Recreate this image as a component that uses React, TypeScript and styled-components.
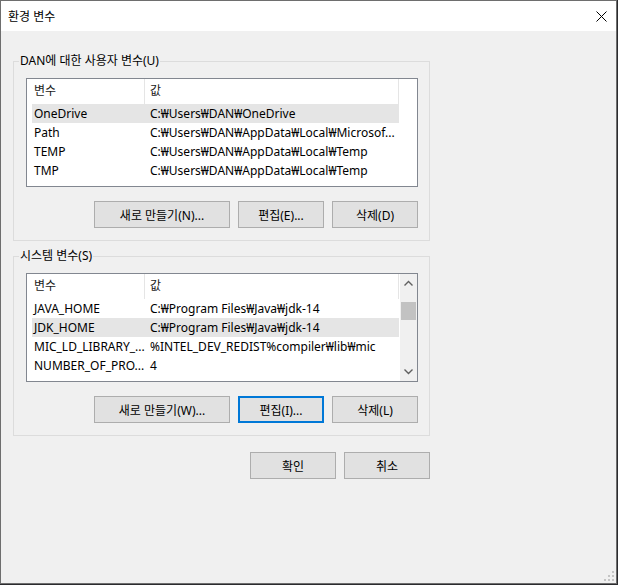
import * as React from "react";
import styled, { createGlobalStyle } from "styled-components";

interface TVar {
  name: string;
  value: string;
}

const userVars: TVar[] = [
  { name: "OneDrive", value: "C:₩Users₩DAN₩OneDrive" },
  { name: "Path", value: "C:₩Users₩DAN₩AppData₩Local₩Microsof..." },
  { name: "TEMP", value: "C:₩Users₩DAN₩AppData₩Local₩Temp" },
  { name: "TMP", value: "C:₩Users₩DAN₩AppData₩Local₩Temp" },
];

const systemVars: TVar[] = [
  { name: "JAVA_HOME", value: "C:₩Program Files₩Java₩jdk-14" },
  { name: "JDK_HOME", value: "C:₩Program Files₩Java₩jdk-14" },
  { name: "MIC_LD_LIBRARY_...", value: "%INTEL_DEV_REDIST%compiler₩lib₩mic" },
  { name: "NUMBER_OF_PRO...", value: "4" },
];

const GlobalStyle = createGlobalStyle`
  html, body {
    margin: 0;
    padding: 0;
    background: #2b2b2e;
  }
  body {
    font-family: "Noto Sans", "Noto Sans CJK KR", sans-serif;
    font-size: 12px;
    color: #000;
  }
`;

const VarList: React.FunctionComponent<{ vars: TVar[]; selected: number; scroll?: boolean }> = (props) => {
  return (
    <ListView>
      <ListBody>
        <HeaderRow>
          <HeaderCell $w={113} $pad={2}>변수</HeaderCell>
          <HeaderCell $w={254} $pad={5}>값</HeaderCell>
        </HeaderRow>
        {props.vars.map((v, i) => (
          <Row key={v.name} $selected={i === props.selected}>
            <Cell $w={113} $pad={2}>{v.name}</Cell>
            <Cell $w={254} $pad={5}>{v.value}</Cell>
          </Row>
        ))}
      </ListBody>
      {props.scroll && (
        <ScrollBar>
          <ScrollArrow>
            <svg width="17" height="17" viewBox="0 0 17 17">
              <polyline points="4.5,11.5 8.5,7.5 12.5,11.5" fill="none" stroke="#606060" strokeWidth="1.4" />
            </svg>
          </ScrollArrow>
          <ScrollTrack>
            <Thumb />
          </ScrollTrack>
          <ScrollArrow>
            <svg width="17" height="17" viewBox="0 0 17 17">
              <polyline points="4.5,5.5 8.5,9.5 12.5,5.5" fill="none" stroke="#606060" strokeWidth="1.4" />
            </svg>
          </ScrollArrow>
        </ScrollBar>
      )}
    </ListView>
  );
};

const App: React.FunctionComponent = () => {
  return (
    <>
      <GlobalStyle />
      <Window>
        <TitleBar>
          <span>환경 변수</span>
          <svg width="11" height="11" viewBox="0 0 11 11">
            <path d="M0.5 0.5 L10.5 10.5 M10.5 0.5 L0.5 10.5" stroke="#000" strokeWidth="1" fill="none" />
          </svg>
        </TitleBar>
        <Body>
          <Group $top={22}>
            <Legend>DAN에 대한 사용자 변수(U)</Legend>
            <VarList vars={userVars} selected={0} />
            <ButtonRow>
              <Button $w={136}>새로 만들기(N)...</Button>
              <Button $w={86}>편집(E)...</Button>
              <Button $w={86}>삭제(D)</Button>
            </ButtonRow>
          </Group>
          <Group $top={7}>
            <Legend>시스템 변수(S)</Legend>
            <VarList vars={systemVars} selected={1} scroll />
            <ButtonRow>
              <Button $w={136}>새로 만들기(W)...</Button>
              <Button $w={86} $focused>편집(I)...</Button>
              <Button $w={86}>삭제(L)</Button>
            </ButtonRow>
          </Group>
          <DialogButtons>
            <Button $w={86}>확인</Button>
            <Button $w={86}>취소</Button>
          </DialogButtons>
          <Grip width="12" height="12" viewBox="0 0 12 12">
            <rect x="9" y="1" width="2" height="2" fill="#c4c4c4" />
            <rect x="5" y="5" width="2" height="2" fill="#c4c4c4" />
            <rect x="9" y="5" width="2" height="2" fill="#c4c4c4" />
            <rect x="1" y="9" width="2" height="2" fill="#c4c4c4" />
            <rect x="5" y="9" width="2" height="2" fill="#c4c4c4" />
            <rect x="9" y="9" width="2" height="2" fill="#c4c4c4" />
          </Grip>
        </Body>
      </Window>
    </>
  );
};

const Window = styled.div`
  width: 617px;
  height: 584px;
  box-sizing: border-box;
  border: 1px solid #6e6e6e;
  background: #f0f0f0;
  display: flex;
  flex-direction: column;
`;

const TitleBar = styled.div`
  height: 30px;
  flex-shrink: 0;
  background: #fff;
  display: flex;
  align-items: center;
  justify-content: space-between;
  padding: 0 9px 0 7px;
`;

const Body = styled.div`
  flex: 1;
  display: flex;
  flex-direction: column;
  align-items: flex-start;
  padding: 0 12px;
`;

const Group = styled.fieldset<{ $top: number }>`
  margin: ${(p) => p.$top}px 0 0 0;
  width: 417px;
  box-sizing: border-box;
  border: 1px solid #dcdcdc;
  padding: 9px 11px 12px 12px;
  min-inline-size: 0;
`;

const Legend = styled.legend`
  padding: 0 1px;
  margin-left: -7px;
  line-height: 16px;
  font-size: 12px;
`;

const ListView = styled.div`
  width: 392px;
  height: 109px;
  box-sizing: border-box;
  border: 1px solid #828790;
  background: #fff;
  display: flex;
  padding-left: 5px;
`;

const ListBody = styled.div`
  width: 367px;
  display: flex;
  flex-direction: column;
  overflow: hidden;
`;

const HeaderRow = styled.div`
  display: flex;
  height: 25px;
  flex-shrink: 0;
`;

const HeaderCell = styled.div<{ $w: number; $pad: number }>`
  width: ${(p) => p.$w}px;
  padding-left: ${(p) => p.$pad}px;
  box-sizing: border-box;
  border-right: 1px solid #e5e5e5;
  line-height: 24px;
  color: #1a1a1a;
`;

const Row = styled.div<{ $selected?: boolean }>`
  display: flex;
  height: 19px;
  flex-shrink: 0;
  background: ${(p) => (p.$selected ? "#e5e5e5" : "transparent")};
`;

const Cell = styled.div<{ $w: number; $pad: number }>`
  width: ${(p) => p.$w}px;
  padding-left: ${(p) => p.$pad}px;
  box-sizing: border-box;
  line-height: 19px;
  white-space: nowrap;
  overflow: hidden;
`;

const ScrollBar = styled.div`
  margin-left: auto;
  width: 17px;
  background: #f0f0f0;
  display: flex;
  flex-direction: column;
`;

const ScrollArrow = styled.div`
  height: 17px;
  display: flex;
`;

const ScrollTrack = styled.div`
  flex: 1;
  padding-top: 11px;
`;

const Thumb = styled.div`
  height: 18px;
  margin: 0 1px;
  background: #c2c2c2;
`;

const ButtonRow = styled.div`
  display: flex;
  justify-content: flex-end;
  gap: 8px;
  margin-top: 14px;
`;

const Button = styled.button<{ $w: number; $focused?: boolean }>`
  width: ${(p) => p.$w}px;
  height: 27px;
  box-sizing: border-box;
  padding: 0;
  font: inherit;
  color: #000;
  background: #e1e1e1;
  border: ${(p) => (p.$focused ? "2px solid #0078d7" : "1px solid #adadad")};
`;

const DialogButtons = styled.div`
  width: 417px;
  display: flex;
  justify-content: flex-end;
  gap: 8px;
  margin-top: 16px;
`;

const Grip = styled.svg`
  margin-top: auto;
  margin-right: -11px;
  margin-bottom: 1px;
  align-self: flex-end;
`;

export default App;
